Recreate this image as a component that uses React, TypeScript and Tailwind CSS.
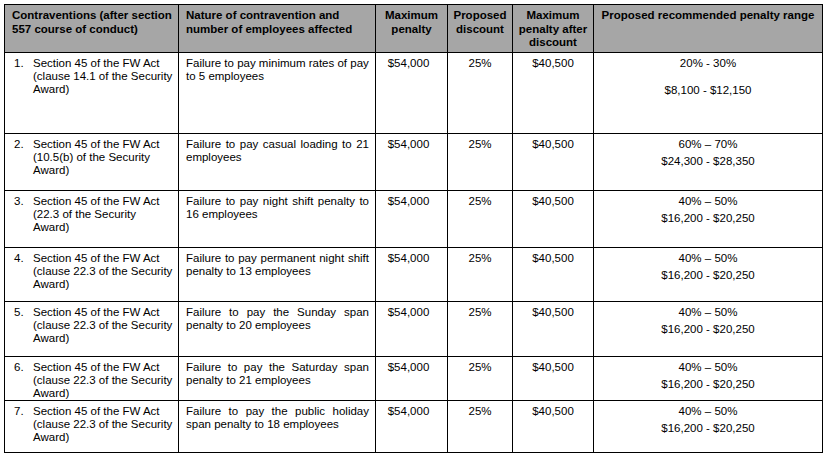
const rows = [
  {
    n: '1.',
    c1: ['Section 45 of the FW Act', '(clause 14.1 of the Security', 'Award)'],
    c2: ['Failure to pay minimum rates of pay', 'to 5 employees'],
    justify: false,
    pct: '20% - 30%',
    range: '$8,100 - $12,150',
    h: 'h-[81px]',
    gap: 'mt-[14px]',
  },
  {
    n: '2.',
    c1: ['Section 45 of the FW Act', '(10.5(b) of the Security', 'Award)'],
    c2: ['Failure to pay casual loading to 21', 'employees'],
    justify: true,
    pct: '60% \u2013 70%',
    range: '$24,300 - $28,350',
    h: 'h-[57px]',
    gap: 'mt-[4px]',
  },
  {
    n: '3.',
    c1: ['Section 45 of the FW Act', '(22.3 of the Security', 'Award)'],
    c2: ['Failure to pay night shift penalty to', '16 employees'],
    justify: true,
    pct: '40% \u2013 50%',
    range: '$16,200 - $20,250',
    h: 'h-[57px]',
    gap: 'mt-[4px]',
  },
  {
    n: '4.',
    c1: ['Section 45 of the FW Act', '(clause 22.3 of the Security', 'Award)'],
    c2: ['Failure to pay permanent night shift', 'penalty to 13 employees'],
    justify: true,
    pct: '40% \u2013 50%',
    range: '$16,200 - $20,250',
    h: 'h-[54px]',
    gap: 'mt-[4px]',
  },
  {
    n: '5.',
    c1: ['Section 45 of the FW Act', '(clause 22.3 of the Security', 'Award)'],
    c2: ['Failure to pay the Sunday span', 'penalty to 20 employees'],
    justify: true,
    pct: '40% \u2013 50%',
    range: '$16,200 - $20,250',
    h: 'h-[55px]',
    gap: 'mt-[4px]',
  },
  {
    n: '6.',
    c1: ['Section 45 of the FW Act', '(clause 22.3 of the Security', 'Award)'],
    c2: ['Failure to pay the Saturday span', 'penalty to 21 employees'],
    justify: true,
    pct: '40% \u2013 50%',
    range: '$16,200 - $20,250',
    h: 'h-[44px]',
    gap: 'mt-[4px]',
  },
  {
    n: '7.',
    c1: ['Section 45 of the FW Act', '(clause 22.3 of the Security', 'Award)'],
    c2: ['Failure to pay the public holiday', 'span penalty to 18 employees'],
    justify: true,
    pct: '40% \u2013 50%',
    range: '$16,200 - $20,250',
    h: 'h-[52px]',
    gap: 'mt-[4px]',
  },
];

const th = 'border border-black bg-[#a6a6a6] align-top pt-[4px] font-bold text-[11.5px] leading-[13.5px]';
const td = 'border border-black align-top pt-[4px]';

function App() {
  return (
    <div className="w-[826px] h-[458px] bg-white pl-[4px] pt-[4px] text-black font-['Liberation_Sans',Arial,sans-serif]">
      <table className="table-fixed border-collapse w-[818px] text-[11.5px] leading-[13px]">
        <colgroup>
          <col className="w-[174px]" />
          <col className="w-[197px]" />
          <col className="w-[72px]" />
          <col className="w-[65px]" />
          <col className="w-[81px]" />
          <col className="w-[229px]" />
        </colgroup>
        <thead>
          <tr className="h-[48px]">
            <th className={`${th} text-left pl-[7px] whitespace-nowrap`}>
              Contraventions (after section
              <br />
              557 course of conduct)
            </th>
            <th className={`${th} text-left pl-[7px] whitespace-nowrap`}>
              Nature of contravention and
              <br />
              number of employees affected
            </th>
            <th className={`${th} text-center`}>
              Maximum
              <br />
              penalty
            </th>
            <th className={`${th} text-center`}>
              Proposed
              <br />
              discount
            </th>
            <th className={`${th} text-center`}>
              Maximum
              <br />
              penalty after
              <br />
              discount
            </th>
            <th className={`${th} text-center whitespace-nowrap`}>Proposed recommended penalty range</th>
          </tr>
        </thead>
        <tbody>
          {rows.map(r => (
            <tr key={r.n} className={r.h}>
              <td className={`${td} pl-[9px] pr-[2px]`}>
                <div className="flex">
                  <span className="w-[19px] shrink-0">{r.n}</span>
                  <div>
                    {r.c1.map(l => (
                      <div key={l} className="whitespace-nowrap">{l}</div>
                    ))}
                  </div>
                </div>
              </td>
              <td className={`${td} pl-[7px] pr-[6px]`}>
                {r.c2.map((l, i) => (
                  <div
                    key={l}
                    className={
                      r.justify && i < r.c2.length - 1
                        ? 'text-justify [text-align-last:justify]'
                        : 'text-left'
                    }
                  >
                    {l}
                  </div>
                ))}
              </td>
              <td className={`${td} text-center pr-[6px]`}>$54,000</td>
              <td className={`${td} text-center`}>25%</td>
              <td className={`${td} text-center`}>$40,500</td>
              <td className={`${td} text-center`}>
                <div>{r.pct}</div>
                <div className={r.gap}>{r.range}</div>
              </td>
            </tr>
          ))}
        </tbody>
      </table>
    </div>
  );
}

export default App;
